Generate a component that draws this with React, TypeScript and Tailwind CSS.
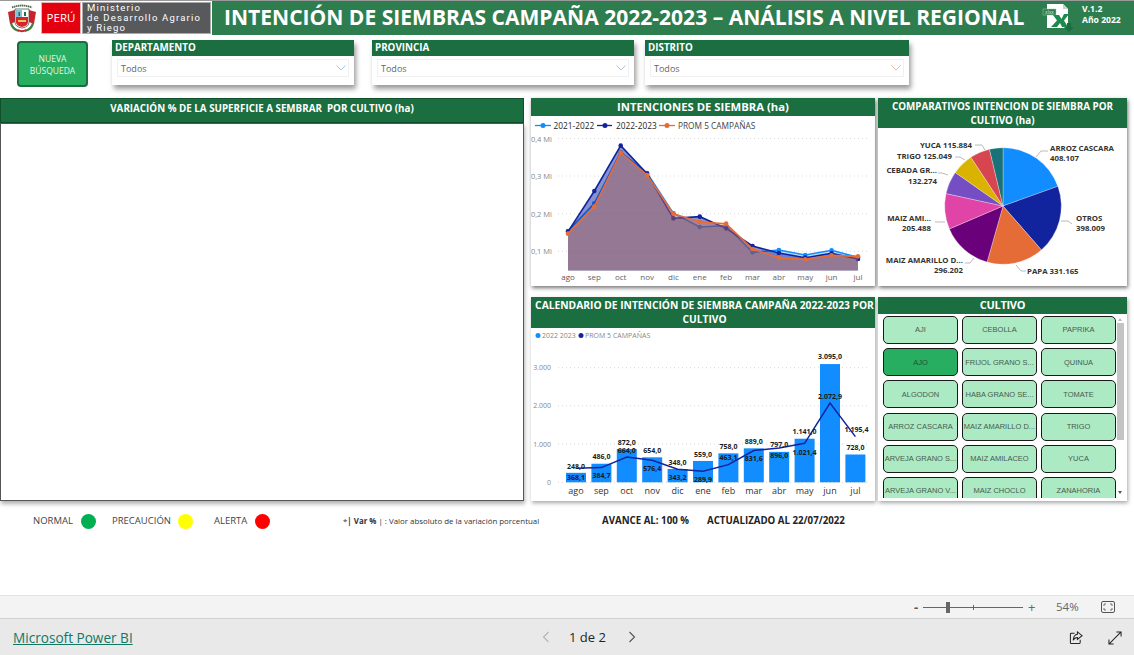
import React from "react";

const months = ["ago","sep","oct","nov","dic","ene","feb","mar","abr","may","jun","jul"];

function Emblem() {
  return (
    <svg width="30" height="30" viewBox="0 0 30 30" className="ml-[7px] shrink-0">
      <path d="M5 4.500 Q15 0.500 25 4.500" fill="none" stroke="#4d6b4d" strokeWidth="1.800" strokeDasharray="1.500 0.500" />
      <path d="M1 9 L8 7 L8 19 L3 21Z M29 9 L22 7 L22 19 L27 21Z" fill="#c8242b" />
      <path d="M4 20 Q5 26 12 28 M26 20 Q25 26 18 28" fill="none" stroke="#3f7f3f" strokeWidth="2.200" />
      <path d="M8 6 H22 V19 Q22 24 15 25 Q8 24 8 19 Z" fill="#fff" stroke="#555" strokeWidth="0.800" />
      <rect x="9" y="7" width="6" height="7" fill="#7fc4dc" />
      <rect x="15" y="7" width="6" height="7" fill="#fff" />
      <rect x="11.500" y="9" width="1.500" height="4" fill="#2d6a3e" />
      <rect x="17" y="9" width="2" height="4" fill="#2d6a3e" />
      <path d="M9 14 H21 V19 Q21 23 15 24 Q9 23 9 19 Z" fill="#d6262c" />
      <rect x="11" y="17" width="8" height="2" fill="#e8c65a" />
      <path d="M11 27 Q15 29.500 19 27" fill="none" stroke="#c8242b" strokeWidth="1.800" />
    </svg>
  );
}

function ExcelIcon() {
  return (
    <svg width="32" height="33" viewBox="0 0 32 33" className="shrink-0 block">
      <path d="M5 2 H21 L26 7 V26 H5 Z" fill="#fff" />
      <path d="M21 2 V7 H26" fill="#c5d2ca" />
      <rect x="1" y="7" width="13" height="6" fill="#2e7d4f" stroke="#a5c8b3" strokeWidth="0.500" />
      <text x="7.500" y="12" textAnchor="middle" fontSize="5" fill="#dfeee5">xlsx</text>
      <path d="M11 13 L17 13 L19.500 17 L22 12 L27 12 L22 18.500 L26 25 L20 25 L18 21 L15 25 L9 25 L15 18.500 Z" fill="#1c8a4e" />
      <path d="M25 21 H29 V25 H32 L27 30 L22 25 H25 Z" fill="#1a6e40" />
    </svg>
  );
}

function Header() {
  return (
    <div className="h-[35px] shrink-0 flex border-t border-[#999] bg-white">
      <div className="w-[212px] flex items-center shrink-0">
        <Emblem />
        <div className="ml-[4px] w-[40px] h-[32px] bg-[#e3000f] border border-[#f3b0b0] flex items-center justify-center text-[11.500px] text-white">PERÚ</div>
        <div className="ml-[1px] w-[129px] h-[32px] bg-[#58595b] border border-[#aaa] text-[9.500px] leading-[10px] text-white pl-[4px] tracking-[1.2px] font-['Roboto',sans-serif] whitespace-nowrap">
          <div>Ministerio</div>
          <div>de Desarrollo Agrario</div>
          <div>y Riego</div>
        </div>
      </div>
      <div className="flex-1 bg-[#2e7d4f] flex items-center pl-[12px]">
        <div className="w-[810px] text-[21.050px] font-bold text-white whitespace-nowrap">INTENCIÓN DE SIEMBRAS CAMPAÑA 2022-2023 – ANÁLISIS A NIVEL REGIONAL</div>
        <div className="ml-[8px]"><ExcelIcon /></div>
        <div className="ml-[8px] text-[8.600px] leading-[11px] font-bold text-white -mt-[7px] whitespace-nowrap">
          <div>V.1.2</div>
          <div>Año 2022</div>
        </div>
      </div>
    </div>
  );
}

function Slicer({ title, className, chevron }: { title: string; className: string; chevron: string }) {
  return (
    <div className={"h-[45px] bg-white shadow-[2px_4px_5px_rgba(0,0,0,0.4)] " + className}>
      <div className="h-[16px] bg-[#1a6e40] text-white text-[9.800px] font-bold leading-[16px] pl-[3px]">{title}</div>
      <div className="px-[5px] pt-[3px]">
        <div className="h-[18px] border border-[#f0f0f0] flex items-center justify-between pl-[3px] pr-[2px] text-[9px] text-[#666]">
          <span className="pt-[1px]">Todos</span>
          <svg width="10" height="6" viewBox="0 0 10 6"><path d="M0.500 0.500 L5 5 L9.500 0.500" fill="none" stroke={chevron} strokeWidth="0.800" /></svg>
        </div>
      </div>
    </div>
  );
}

function FilterRow() {
  return (
    <div className="h-[63px] shrink-0 flex pt-[5px] items-start">
      <button className="ml-[17px] mt-[1px] w-[71px] h-[46px] pt-[2px] rounded-[4px] bg-[#27ae60] border-2 border-[#1a6e40] text-[#e6f5ec] text-[8.500px] leading-[12px]">NUEVA<br />BÚSQUEDA</button>
      <Slicer title="DEPARTAMENTO" className="ml-[24px] w-[242px]" chevron="#8fb8da" />
      <Slicer title="PROVINCIA" className="ml-[18px] w-[262px]" chevron="#8fb8da" />
      <Slicer title="DISTRITO" className="ml-[11px] w-[264px]" chevron="#dfa58c" />
    </div>
  );
}

const px = (i: number) => 568 + i * 26.36;
const py = (z: number) => 95 + z / 3;
const s2021 = [408,325,172,234,355,396,392,472,465,480,466,487];
const s2022 = [410,288,152,236,370,365,400,453,474,488,475,492];
const sProm = [416,335,173,240,356,381,386,462,488,493,481,484];

function Series({ data, color, fill }: { data: number[]; color: string; fill: string }) {
  const pts = data.map((z, i) => `${px(i)},${py(z)}`).join(" ");
  return (
    <g>
      <polygon points={`${px(0)},270.5 ${pts} ${px(11)},270.5`} fill={fill} />
      <polyline points={pts} fill="none" stroke={color} strokeWidth="1.600" />
      {data.map((z, i) => <circle key={i} cx={px(i)} cy={py(z)} r="2.300" fill={color} />)}
    </g>
  );
}

function AreaChart() {
  const grid = [[138.5,"0,4 Mi"],[176,"0,3 Mi"],[213.700,"0,2 Mi"],[251.300,"0,1 Mi"]] as const;
  return (
    <div className="h-[188px] bg-white shadow-[1px_2px_4px_rgba(0,0,0,0.55)] flex flex-col">
      <div className="h-[18px] shrink-0 bg-[#1a6e40] text-white text-[11.300px] font-bold flex items-center justify-center">INTENCIONES DE SIEMBRA (ha)</div>
      <svg className="block" width="344" height="170" viewBox="531 116 344 170">
        <g fontSize="8.300">
          <line x1="535" x2="551" y1="125.500" y2="125.500" stroke="#118DFF" strokeWidth="1.300" /><circle cx="543" cy="125.500" r="2.500" fill="#118DFF" />
          <text x="553.500" y="128.500" fill="#252423">2021-2022</text>
          <line x1="597" x2="612" y1="125.500" y2="125.500" stroke="#12239E" strokeWidth="1.300" /><circle cx="605" cy="125.500" r="2.500" fill="#12239E" />
          <text x="616" y="128.500" fill="#252423">2022-2023</text>
          <line x1="659" x2="675" y1="125.500" y2="125.500" stroke="#E66C37" strokeWidth="1.300" /><circle cx="667" cy="125.500" r="2.500" fill="#E66C37" />
          <text x="678" y="128.500" fill="#444">PROM 5 CAMPAÑAS</text>
        </g>
        {grid.map(([y, t]) => (
          <g key={t}>
            <line x1="558" x2="868" y1={y} y2={y} stroke="#d5d5d5" strokeWidth="1" strokeDasharray="1 3" />
            <text x="552" y={y + 3} textAnchor="end" fontSize="7.500" fill="#888">{t}</text>
          </g>
        ))}
        <Series data={s2021} color="#118DFF" fill="rgba(17,141,255,0.3)" />
        <Series data={s2022} color="#12239E" fill="rgba(18,35,158,0.5)" />
        <Series data={sProm} color="#E66C37" fill="rgba(230,108,55,0.38)" />
        {months.map((m, i) => <text key={m} x={px(i)} y="280" textAnchor="middle" fontSize="8" fill={i === 0 ? "#7a4a4a" : "#666"}>{m}</text>)}
      </svg>
    </div>
  );
}

const pieData: [number, string][] = [
  [408107,"#118DFF"],[398009,"#12239E"],[331165,"#E66C37"],[296202,"#6B007B"],[205488,"#E044A7"],
  [132274,"#744EC2"],[125049,"#D9B300"],[115884,"#D64550"],[78000,"#197278"],
];

function PieChart() {
  const total = pieData.reduce((a, d) => a + d[0], 0);
  const cx = 1003, cy = 206, r = 58.300;
  let a = 0;
  const slices = pieData.map(([v, c]) => {
    const a0 = a; a += (v / total) * Math.PI * 2;
    const x0 = cx + r * Math.sin(a0), y0 = cy - r * Math.cos(a0);
    const x1 = cx + r * Math.sin(a), y1 = cy - r * Math.cos(a);
    return <path key={c} d={`M${cx} ${cy} L${x0} ${y0} A${r} ${r} 0 ${a - a0 > Math.PI ? 1 : 0} 1 ${x1} ${y1} Z`} fill={c} stroke="#fff" strokeWidth="0.300" />;
  });
  const Label = ({ x, y, t, anchor }: { x: number; y: number; t: string; anchor?: "end" | "start" }) => (
    <text x={x} y={y} textAnchor={anchor} fontSize="7.800" fontWeight="700" fill="#333">{t}</text>
  );
  return (
    <div className="h-[188px] bg-white shadow-[1px_2px_4px_rgba(0,0,0,0.55)] flex flex-col">
      <div className="h-[30px] shrink-0 bg-[#1a6e40] text-white text-[9.850px] leading-[14px] font-bold flex items-center justify-center text-center px-[6px]">COMPARATIVOS INTENCION DE SIEMBRA POR CULTIVO (ha)</div>
      <svg className="block" width="249" height="158" viewBox="878 128 249 158">
        {slices}
        <g fill="none" stroke="#aaa" strokeWidth="0.800">
          <path d="M1036 157 L1041 151 L1048 151" />
          <path d="M1061 221 L1068 221 L1072 224" />
          <path d="M1016 265 L1021 271 L1026 271" />
          <path d="M974 258 L970 263 L965 263" />
          <path d="M945 222 L935 222" />
          <path d="M948 175 L942 173 L938 173" />
          <path d="M965 160 L960 157 L955 157" />
          <path d="M985 150 L982 145 L975 145" />
        </g>
        <Label x={1050} y={151} t="ARROZ CASCARA" />
        <Label x={1050} y={161} t="408.107" />
        <Label x={1076} y={221} t="OTROS" />
        <Label x={1076} y={231} t="398.009" />
        <Label x={1027} y={274} t="PAPA 331.165" />
        <Label x={963} y={263} t="MAIZ AMARILLO D..." anchor="end" />
        <Label x={963} y={273} t="296.202" anchor="end" />
        <Label x={931} y={221} t="MAIZ AMI..." anchor="end" />
        <Label x={931} y={231} t="205.488" anchor="end" />
        <Label x={937} y={173} t="CEBADA GR..." anchor="end" />
        <Label x={937} y={184} t="132.274" anchor="end" />
        <Label x={952} y={159} t="TRIGO 125.049" anchor="end" />
        <Label x={972} y={148} t="YUCA 115.884" anchor="end" />
      </svg>
    </div>
  );
}

const barVals = [248,486,872,654,348,559,758,889,797,1141,3095,728];
const lineVals = [368.1,384.7,664,576.4,343.2,289.9,463.1,831.6,896,1021.4,2072.9,1195.4];
const barLabelY = [515,485,443,467,503,479,455,440,449,410,185,458];
const lineLabelY = [546,541,467,521,547,553,487,491,482,471,305,404];
const fmt = (v: number) => v.toLocaleString("de-DE", { minimumFractionDigits: 1, maximumFractionDigits: 1 });

function BarChart() {
  const bx = (i: number) => 576 + i * 25.4;
  const by = (v: number) => 482.3 - (v * 38.2) / 1000;
  const zy = (z: number) => 295 + z / 3 + 2.500;
  return (
    <div className="h-[204px] bg-white shadow-[1px_2px_4px_rgba(0,0,0,0.35)] flex flex-col">
      <div className="h-[31px] shrink-0 bg-[#1a6e40] text-white text-[10.250px] leading-[14px] font-bold flex items-center justify-center text-center pb-[1px] pl-[3px] whitespace-nowrap">CALENDARIO DE INTENCIÓN DE SIEMBRA CAMPAÑA 2022-2023 POR<br />CULTIVO</div>
      <svg className="block" width="344" height="173" viewBox="531 328 344 173">
        <circle cx="538" cy="335.500" r="2.500" fill="#118DFF" />
        <text x="542" y="338" fontSize="7" fill="#888">2022  2023</text>
        <circle cx="581" cy="335.500" r="2.500" fill="#12239E" />
        <text x="585" y="338" fontSize="7" fill="#888">PROM 5 CAMPAÑAS</text>
        {[[0,"0"],[1000,"1.000"],[2000,"2.000"],[3000,"3.000"]].map(([v, t]) => (
          <g key={t as string}>
            <line x1="558" x2="868" y1={by(v as number)} y2={by(v as number)} stroke="#d5d5d5" strokeDasharray="1 3" />
            <text x="551" y={by(v as number) + 2.500} fontSize="7" textAnchor="end" fill="#888">{t}</text>
          </g>
        ))}
        {barVals.map((v, i) => <rect key={i} x={bx(i) - 10} y={by(v)} width="20" height={482.3 - by(v)} fill="#118DFF" />)}
        <polyline points={lineVals.map((v, i) => `${bx(i)},${by(v)}`).join(" ")} fill="none" stroke="#12239E" strokeWidth="1.500" />
        <g fontSize="7" fontWeight="700" textAnchor="middle" fill="#1a1a1a">
          {barVals.map((v, i) => <text key={i} x={bx(i)} y={zy(barLabelY[i])}>{fmt(v)}</text>)}
          {lineVals.map((v, i) => <text key={i} x={bx(i) + (i === 11 ? 1 : 0)} y={zy(lineLabelY[i])}>{fmt(v)}</text>)}
        </g>
        {months.map((m, i) => <text key={m} x={bx(i)} y="494" textAnchor="middle" fontSize="9" fill="#333">{m}</text>)}
      </svg>
    </div>
  );
}

const crops = ["AJI","CEBOLLA","PAPRIKA","AJO","FRIJOL GRANO S...","QUINUA","ALGODON","HABA GRANO SE...","TOMATE","ARROZ CASCARA","MAIZ AMARILLO D...","TRIGO","ARVEJA GRANO S...","MAIZ AMILACEO","YUCA","ARVEJA GRANO V...","MAIZ CHOCLO","ZANAHORIA"];

function Cultivo() {
  return (
    <div className="relative h-[204px] bg-white shadow-[1px_2px_4px_rgba(0,0,0,0.35)] flex flex-col">
      <div className="h-[17px] shrink-0 bg-[#1a6e40] text-white text-[11px] font-bold leading-[16px] text-center tracking-[-0.3px]">CULTIVO</div>
      <div className="h-[184px] overflow-hidden grid grid-cols-[75px_75px_75px] gap-x-[4px] gap-y-[4.200px] auto-rows-[28px] pl-[5px] pt-[2px]">
        {crops.map((c) => (
          <div key={c} className={"rounded-[5px] border-[1.500px] border-[#1a1a1a] flex items-center justify-center text-[7.500px] whitespace-nowrap font-['Liberation_Sans',sans-serif] " + (c === "AJO" ? "bg-[#27ae60] text-[#24503a]" : "bg-[#abeac3] text-[#4a5a50]")}>{c}</div>
        ))}
      </div>
      <div className="absolute right-[3px] top-[26px] w-[7px] h-[117px] bg-[#c4c4c4]" />
      <div className="absolute right-[5px] top-[21px] border-x-[2px] border-b-[3px] border-x-transparent border-b-[#bbb]" />
      <div className="absolute right-[5px] bottom-[7px] border-x-[2px] border-t-[3px] border-x-transparent border-t-[#555]" />
    </div>
  );
}

function MainRow() {
  return (
    <div className="h-[403px] shrink-0 flex items-start">
      <div className="w-[524px] shrink-0">
        <div className="h-[25px] bg-[#1a6e40] border border-[#0f4f2c] text-white text-[9.800px] font-bold flex items-center justify-center pb-[3px] whitespace-pre">VARIACIÓN % DE LA SUPERFICIE A SEMBRAR  POR CULTIVO (ha)</div>
        <div className="h-[378px] bg-white border border-[#555] shadow-[1px_3px_4px_rgba(0,0,0,0.3)]" />
      </div>
      <div className="ml-[7px] w-[344px] shrink-0 flex flex-col gap-[11px]">
        <AreaChart />
        <BarChart />
      </div>
      <div className="ml-[3px] w-[249px] shrink-0 flex flex-col gap-[11px]">
        <PieChart />
        <Cultivo />
      </div>
    </div>
  );
}

function LegendRow() {
  return (
    <div className="h-[18px] mt-[11px] shrink-0 flex items-center text-[9.500px] text-[#444]">
      <span className="ml-[33px] w-[48px]">NORMAL</span>
      <span className="w-[15px] h-[15px] rounded-full bg-[#00b050]" />
      <span className="ml-[16px] w-[66px]">PRECAUCIÓN</span>
      <span className="w-[15px] h-[15px] rounded-full bg-[#ffff00]" />
      <span className="ml-[21px] w-[41px]">ALERTA</span>
      <span className="w-[15px] h-[15px] rounded-full bg-[#ff0000]" />
      <span className="ml-[73px] w-[259px] text-[7.900px] text-[#333] whitespace-nowrap pt-[1px]">*<b>| Var %</b> | : Valor absoluto de la variación porcentual</span>
      <span className="text-[9.700px] font-bold text-[#222] w-[105px] whitespace-nowrap pt-[1px]">AVANCE AL: 100 %</span>
      <span className="text-[9.700px] font-bold text-[#222] whitespace-nowrap pt-[1px]">ACTUALIZADO AL 22/07/2022</span>
    </div>
  );
}

function ZoomBar() {
  return (
    <div className="h-[23px] shrink-0 bg-[#f3f3f3] border-t border-[#e3e3e3] flex items-center justify-end text-[#666]">
      <span className="text-[13px] font-bold w-[9px] leading-none text-[#555]">-</span>
      <div className="relative w-[100px] h-[1px] bg-[#666]">
        <div className="absolute left-[23px] -top-[5px] w-[4px] h-[11px] bg-[#666]" />
        <div className="absolute left-[50px] -top-[2px] w-[1px] h-[5px] bg-[#666]" />
      </div>
      <span className="ml-[5px] text-[13px] w-[18px] leading-none">+</span>
      <span className="ml-[10px] text-[11.500px] w-[37px]">54%</span>
      <svg className="ml-[8px] mr-[19px]" width="14" height="12" viewBox="0 0 14 12" fill="none" stroke="#555">
        <rect x="0.500" y="0.500" width="13" height="11" rx="1.500" />
        <path d="M3 5 V3 H5 M9 3 H11 V5 M11 7 V9 H9 M5 9 H3 V7" strokeWidth="0.800" />
      </svg>
    </div>
  );
}

function Footer() {
  return (
    <div className="h-[37px] shrink-0 bg-[#e9e9e9] border-t border-[#d0d0d0] flex items-center">
      <a className="ml-[13px] w-[120px] text-[13.600px] pt-[3px] text-[#117865] underline whitespace-nowrap">Microsoft Power BI</a>
      <svg className="ml-[409px]" width="8" height="12" viewBox="0 0 8 12"><path d="M6.500 1 L1.500 6 L6.500 11" fill="none" stroke="#b5b5b5" strokeWidth="1.100" /></svg>
      <span className="ml-[19px] w-[38px] pt-[2px] text-[13px] font-medium text-[#252423] whitespace-nowrap">1 de 2</span>
      <svg className="ml-[21px]" width="8" height="12" viewBox="0 0 8 12"><path d="M1.500 1 L6.500 6 L1.500 11" fill="none" stroke="#555" strokeWidth="1.100" /></svg>
      <svg className="ml-[433px] mt-[1px]" width="14" height="14" viewBox="0 0 15 15" fill="none" stroke="#252423" strokeWidth="1.100">
        <path d="M6 2.500 H2.500 Q1.500 2.500 1.500 3.500 V12.500 Q1.500 13.500 2.500 13.500 H10.500 Q12 13.500 12 12 V9.500" />
        <path d="M9 1 L14 5 L9 9 V7 Q6 7 4.500 10 Q5 4 9 3.500 Z" />
      </svg>
      <svg className="ml-[25px] mt-[1px]" width="14" height="14" viewBox="0 0 15 15" fill="none" stroke="#252423" strokeWidth="1.100">
        <path d="M9 1 H14 V6 M14 1 L1 14 M1 9 V14 H6" />
      </svg>
    </div>
  );
}

export default function App() {
  return (
    <div className="w-[1134px] h-[655px] bg-white overflow-hidden flex flex-col font-['Open_Sans',sans-serif]">
      <Header />
      <FilterRow />
      <MainRow />
      <LegendRow />
      <div className="flex-1" />
      <ZoomBar />
      <Footer />
    </div>
  );
}
